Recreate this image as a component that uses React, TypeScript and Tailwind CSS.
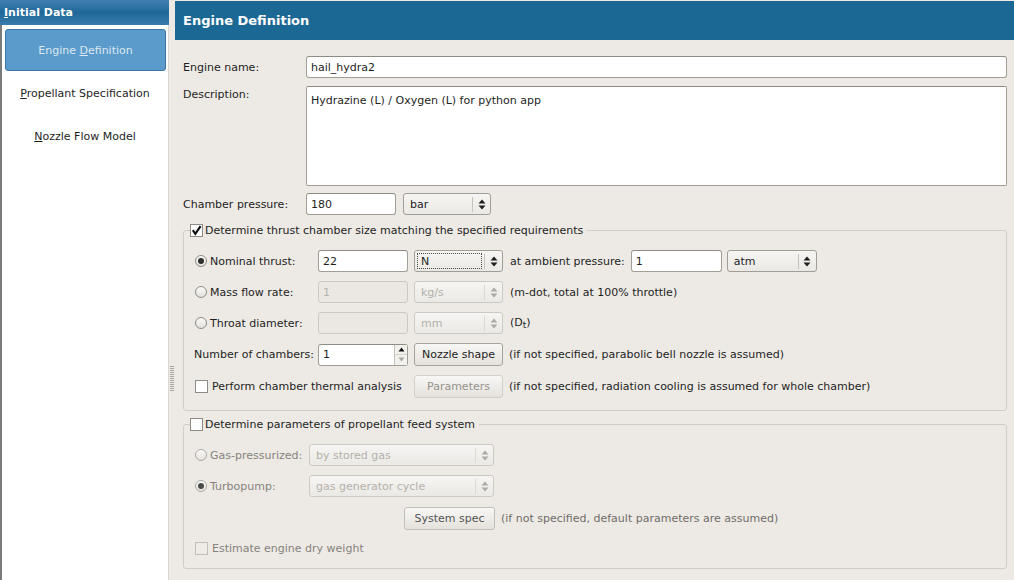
import React from "react";

type P = { className?: string; disabled?: boolean };

function Arrows({ disabled }: { disabled?: boolean }) {
  return (
    <svg width="8" height="11" viewBox="0 0 8 11" className={disabled ? "fill-[#aeaba6]" : "fill-[#1e1e1e]"}>
      <path d="M4 0.5L7.5 4.5H0.5Z" />
      <path d="M0.5 6.5H7.5L4 10.5Z" />
    </svg>
  );
}

function Combo({ value, className, disabled, focus }: P & { value: string; focus?: boolean }) {
  return (
    <div
      className={`h-[22px] shrink-0 flex items-center rounded-[3px] border bg-gradient-to-b from-[#f6f5f3] to-[#ebe9e5] ${
        disabled ? "border-[#cdc9c3] text-[#b4b1ab]" : "border-[#a29e97] text-[#1e1e1e]"
      } ${className}`}
    >
      <div className="flex-1 h-full flex p-[2px]">
        <div
          className={`flex-1 flex items-center pl-[3px] border ${
            focus ? "border-dotted border-[#4a4a4a]" : "border-transparent"
          }`}
        >
          {value}
        </div>
      </div>
      <div className={`w-px h-[15px] ${disabled ? "bg-[#dcd8d3]" : "bg-[#c6c2bc]"}`} />
      <div className="w-[17px] flex justify-center">
        <Arrows disabled={disabled} />
      </div>
    </div>
  );
}

function Field({ value, className, disabled }: P & { value: string }) {
  return (
    <div
      className={`h-[22px] shrink-0 flex items-center pl-[4px] rounded-[3px] border ${
        disabled ? "border-[#cdc9c3] bg-[#ebe8e4] text-[#b4b1ab]" : "border-[#a29e97] border-t-[#8f8b85] bg-white text-[#1e1e1e]"
      } ${className}`}
    >
      {value}
    </div>
  );
}

function Btn({ label, className, disabled }: P & { label: string }) {
  return (
    <div
      className={`h-[23px] shrink-0 flex items-center justify-center rounded-[3px] border bg-gradient-to-b from-[#f8f7f5] to-[#e5e2dd] ${
        disabled ? "border-[#d2cec8] text-[#96938e]" : "border-[#a7a29b] text-[#1e1e1e]"
      } ${className}`}
    >
      {label}
    </div>
  );
}

function Radio({ checked, disabled }: { checked?: boolean; disabled?: boolean }) {
  return (
    <div
      className={`w-[12px] h-[12px] shrink-0 rounded-full border flex items-center justify-center bg-gradient-to-b from-[#fbfbfa] to-[#e4e1dc] ${
        disabled ? "border-[#aeaaa4]" : "border-[#8e8a84]"
      }`}
    >
      {checked && <div className={`w-[6px] h-[6px] rounded-full ${disabled ? "bg-[#4a4a4a]" : "bg-[#2e2e2e]"}`} />}
    </div>
  );
}

function Check({ checked, disabled }: { checked?: boolean; disabled?: boolean }) {
  return (
    <div
      className={`w-[13px] h-[13px] shrink-0 border flex items-center justify-center ${
        disabled ? "border-[#c2beb8] bg-[#eeebe7]" : "border-[#8e8a84] bg-white"
      }`}
    >
      {checked && (
        <svg width="11" height="11" viewBox="0 0 11 11">
          <path d="M1.8 5.2L4.3 8.8L9.6 1.2" stroke="#111" strokeWidth="2.2" fill="none" />
        </svg>
      )}
    </div>
  );
}

function SideItem({ label, mn, rest, active }: { label?: string; mn: string; rest: string; active?: boolean }) {
  if (active) {
    return (
      <div className="ml-[3px] mt-[4px] w-[161px] h-[42px] rounded-[3px] border border-[#3d76a6] bg-[#5b9bcb] flex items-center justify-center text-[#dbe7f1]">
        <span>
          {label}
          <u>{mn}</u>
          {rest}
        </span>
      </div>
    );
  }
  return (
    <div className="h-[43px] flex items-center justify-center text-[#1e1e1e]">
      <span>
        <u>{mn}</u>
        {rest}
      </span>
    </div>
  );
}

export default function App() {
  return (
    <div className="w-[1014px] h-[580px] overflow-hidden flex bg-[#edeae5] text-[11px] leading-[13px] font-['DejaVu_Sans',sans-serif]">
      {/* left navigator */}
      <div className="w-[169px] shrink-0 flex flex-col">
        <div className="h-[25px] bg-gradient-to-b from-[#3f80b1] via-[#1d6898] to-[#3a7bab] text-white font-bold text-[11px] flex items-center pl-[4px]">
          <span>
            <u>I</u>nitial Data
          </span>
        </div>
        <div className="flex-1 bg-white border-l-2 border-l-[#7b7b7b] border-r border-r-[#d9d7d3]">
          <SideItem active label="Engine " mn="D" rest="efinition" />
          <div className="h-[1px]" />
          <SideItem mn="P" rest="ropellant Specification" />
          <SideItem mn="N" rest="ozzle Flow Model" />
        </div>
      </div>

      {/* splitter */}
      <div className="w-[6px] shrink-0 flex flex-col items-center">
        <div className="mt-[366px] w-[4px] h-[26px] bg-[repeating-linear-gradient(to_bottom,#aaa7a2_0px,#aaa7a2_1px,transparent_1px,transparent_2px)]" />
      </div>

      {/* main page */}
      <div className="flex-1 flex flex-col pt-[1px] text-[#1e1e1e]">
        <div className="h-[39px] bg-[#1c6894] text-white font-bold text-[13px] flex items-center pl-[8px]">
          Engine Definition
        </div>

        <div className="pl-[8px] pr-[7px] pt-[16px] flex flex-col">
          <div className="flex items-center">
            <div className="w-[123px] shrink-0">Engine name:</div>
            <Field value="hail_hydra2" className="flex-1" />
          </div>

          <div className="flex items-start mt-[8px]">
            <div className="w-[123px] shrink-0 pt-[2px]">Description:</div>
            <div className="flex-1 h-[100px] rounded-[2px] border border-[#a29e97] border-t-[#8f8b85] bg-white pl-[4px] pt-[7px]">
              Hydrazine (L) / Oxygen (L) for python app
            </div>
          </div>

          <div className="flex items-center mt-[7px] gap-[7px]">
            <div className="w-[116px] shrink-0">Chamber pressure:</div>
            <Field value="180" className="w-[90px]" />
            <Combo value="bar" className="w-[88px]" />
          </div>

          {/* thrust chamber group */}
          <fieldset className="mt-[8px] border border-[#d0ccc6] rounded-[3px] pb-[12px]">
            <legend className="ml-[6px] pr-[4px] flex items-center gap-[2px] h-[14px]">
              <Check checked />
              <span>Determine thrust chamber size matching the specified requirements</span>
            </legend>
            <div className="flex flex-col gap-[9px] pt-[13px] pl-[11px]">
              <div className="flex items-center">
                <div className="w-[123px] shrink-0 flex items-center gap-[3px]">
                  <Radio checked />
                  <span>Nominal thrust:</span>
                </div>
                <Field value="22" className="w-[90px]" />
                <Combo value="N" focus className="w-[89px] ml-[6px]" />
                <span className="ml-[7px]">at ambient pressure:</span>
                <Field value="1" className="w-[91px] ml-[6px]" />
                <Combo value="atm" className="w-[90px] ml-[5px]" />
              </div>
              <div className="flex items-center">
                <div className="w-[123px] shrink-0 flex items-center gap-[3px]">
                  <Radio />
                  <span>Mass flow rate:</span>
                </div>
                <Field value="1" disabled className="w-[90px]" />
                <Combo value="kg/s" disabled className="w-[89px] ml-[6px]" />
                <span className="ml-[7px]">(m-dot, total at 100% throttle)</span>
              </div>
              <div className="flex items-center">
                <div className="w-[123px] shrink-0 flex items-center gap-[3px]">
                  <Radio />
                  <span>Throat diameter:</span>
                </div>
                <Field value="" disabled className="w-[90px]" />
                <Combo value="mm" disabled className="w-[89px] ml-[6px]" />
                <span className="ml-[7px]">
                  (D<span className="text-[9px] relative top-[2px]">t</span>)
                </span>
              </div>
              <div className="flex items-center">
                <div className="w-[124px] shrink-0 -ml-[1px]">Number of chambers:</div>
                <div className="w-[90px] h-[22px] shrink-0 flex rounded-[3px] border border-[#a29e97] border-t-[#8f8b85] bg-white">
                  <div className="flex-1 flex items-center pl-[4px]">1</div>
                  <div className="w-[13px] border-l border-[#c6c2bc] flex flex-col bg-[#f3f1ee]">
                    <div className="flex-1 flex items-center justify-center border-b border-[#d6d2cc]">
                      <svg width="7" height="5" viewBox="0 0 7 5"><path d="M3.5 0.5L6.5 4.5H0.5Z" fill="#111" /></svg>
                    </div>
                    <div className="flex-1 flex items-center justify-center">
                      <svg width="7" height="5" viewBox="0 0 7 5"><path d="M0.5 0.5H6.5L3.5 4.5Z" fill="#a9a6a1" /></svg>
                    </div>
                  </div>
                </div>
                <Btn label="Nozzle shape" className="w-[89px] ml-[6px]" />
                <span className="ml-[6px]">(if not specified, parabolic bell nozzle is assumed)</span>
              </div>
              <div className="flex items-center">
                <div className="w-[219px] shrink-0 flex items-center gap-[4px]">
                  <Check />
                  <span>Perform chamber thermal analysis</span>
                </div>
                <Btn label="Parameters" disabled className="w-[89px]" />
                <span className="ml-[6px]">(if not specified, radiation cooling is assumed for whole chamber)</span>
              </div>
            </div>
          </fieldset>

          {/* feed system group */}
          <fieldset className="mt-[6px] border border-[#d0ccc6] rounded-[3px] pb-[13px]">
            <legend className="ml-[6px] pr-[4px] flex items-center gap-[2px] h-[14px]">
              <Check />
              <span>Determine parameters of propellant feed system</span>
            </legend>
            <div className="flex flex-col gap-[9px] pt-[13px] pl-[11px] text-[#85827d]">
              <div className="flex items-center">
                <div className="w-[114px] shrink-0 flex items-center gap-[3px]">
                  <Radio disabled />
                  <span>Gas-pressurized:</span>
                </div>
                <Combo value="by stored gas" disabled className="w-[185px]" />
              </div>
              <div className="flex items-center">
                <div className="w-[114px] shrink-0 flex items-center gap-[3px]">
                  <Radio checked disabled />
                  <span>Turbopump:</span>
                </div>
                <Combo value="gas generator cycle" disabled className="w-[185px]" />
              </div>
              <div className="flex items-center pl-[209px] mt-[1px]">
                <Btn label="System spec" className="w-[91px] text-[#555] border-[#c2beb8]" />
                <span className="ml-[6px] text-[#6f6c68]">(if not specified, default parameters are assumed)</span>
              </div>
              <div className="flex items-center gap-[4px] mt-[3px]">
                <Check disabled />
                <span>Estimate engine dry weight</span>
              </div>
            </div>
          </fieldset>
        </div>
      </div>
    </div>
  );
}
